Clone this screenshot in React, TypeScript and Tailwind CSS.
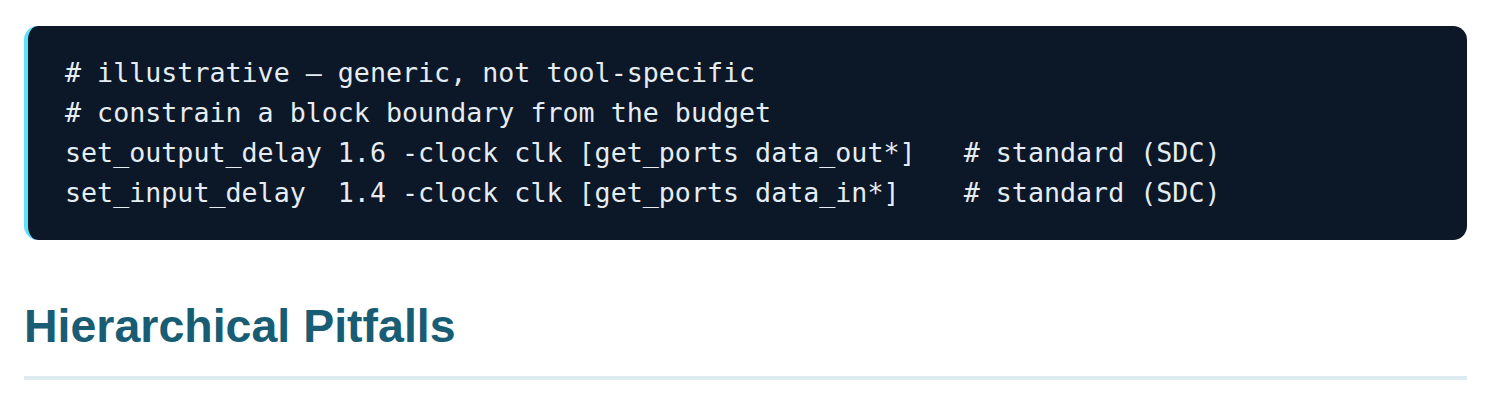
const codeLines = [
  "# illustrative — generic, not tool-specific",
  "# constrain a block boundary from the budget",
  "set_output_delay 1.6 -clock clk [get_ports data_out*]   # standard (SDC)",
  "set_input_delay  1.4 -clock clk [get_ports data_in*]    # standard (SDC)",
];

const App = () => {
  return (
    <div className="w-full bg-white pl-[24px] pr-[27px] pt-[26px] pb-[24px]">
      <pre className="bg-[#0c1727] text-[#e5edf3] rounded-[14px] border-l-[4px] border-[#5fe1f7] pl-[37px] pr-[24px] py-[27px] overflow-hidden">
        <code className="block text-[26.67px] leading-[40px] font-['DejaVu_Sans_Mono',monospace] whitespace-pre">
          {codeLines.join("\n")}
        </code>
      </pre>
      <h2 className="mt-[58px] pb-[22px] border-b-[4px] border-[#dcecf0] text-[46.5px] leading-[56px] font-bold text-[#185d74] font-['Liberation_Sans',Arial,sans-serif]">
        Hierarchical Pitfalls
      </h2>
    </div>
  );
};

export default App;
